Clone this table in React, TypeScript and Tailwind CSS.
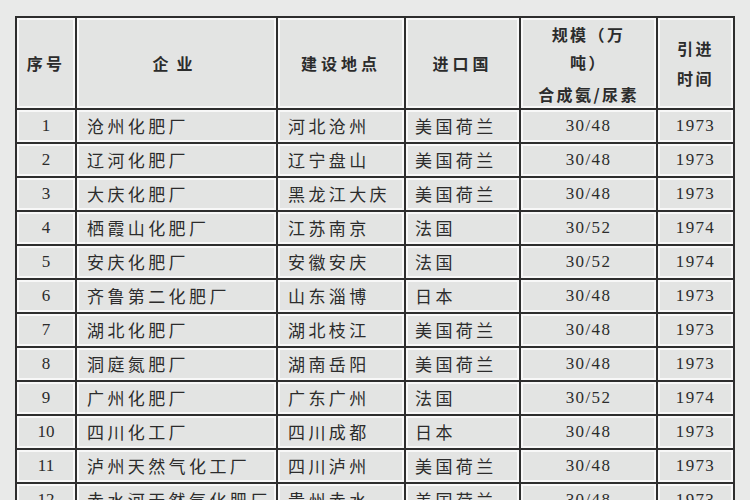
import React from 'react'

interface Plant {
  no: string
  name: string
  site: string
  country: string
  scale: string
  year: string
}

const plants: Plant[] = [
  { no: '1', name: '沧州化肥厂', site: '河北沧州', country: '美国荷兰', scale: '30/48', year: '1973' },
  { no: '2', name: '辽河化肥厂', site: '辽宁盘山', country: '美国荷兰', scale: '30/48', year: '1973' },
  { no: '3', name: '大庆化肥厂', site: '黑龙江大庆', country: '美国荷兰', scale: '30/48', year: '1973' },
  { no: '4', name: '栖霞山化肥厂', site: '江苏南京', country: '法国', scale: '30/52', year: '1974' },
  { no: '5', name: '安庆化肥厂', site: '安徽安庆', country: '法国', scale: '30/52', year: '1974' },
  { no: '6', name: '齐鲁第二化肥厂', site: '山东淄博', country: '日本', scale: '30/48', year: '1973' },
  { no: '7', name: '湖北化肥厂', site: '湖北枝江', country: '美国荷兰', scale: '30/48', year: '1973' },
  { no: '8', name: '洞庭氮肥厂', site: '湖南岳阳', country: '美国荷兰', scale: '30/48', year: '1973' },
  { no: '9', name: '广州化肥厂', site: '广东广州', country: '法国', scale: '30/52', year: '1974' },
  { no: '10', name: '四川化工厂', site: '四川成都', country: '日本', scale: '30/48', year: '1973' },
  { no: '11', name: '泸州天然气化工厂', site: '四川泸州', country: '美国荷兰', scale: '30/48', year: '1973' },
  { no: '12', name: '赤水河天然气化肥厂', site: '贵州赤水', country: '美国荷兰', scale: '30/48', year: '1973' },
]

const cjk = "font-['Noto_Sans_CJK_SC',sans-serif]"
const serif = "font-['Liberation_Serif','Noto_Sans_CJK_SC',serif]"
const cell = 'border-2 border-[#2e2e2e] shadow-[inset_0_0_0_2px_#f8f8f8] bg-[#e3e4e3] p-0'

export default function App() {
  return (
    <div className="w-[750px] h-[500px] overflow-hidden bg-[#e9eae9] pt-[16px] pl-[15px]">
      <table className="border-collapse table-fixed w-[718px] text-[#2c2c2c]">
        <colgroup>
          <col className="w-[60px]" />
          <col className="w-[201px]" />
          <col className="w-[128px]" />
          <col className="w-[115px]" />
          <col className="w-[137px]" />
          <col className="w-[77px]" />
        </colgroup>
        <thead>
          <tr className={`h-[92px] ${cjk} font-bold text-[16px]`}>
            <th className={`${cell} tracking-[0.2em]`}>序号</th>
            <th className={`${cell} tracking-[0.5em]`}>企业</th>
            <th className={`${cell} tracking-[0.25em]`}>建设地点</th>
            <th className={`${cell} tracking-[0.25em]`}>进口国</th>
            <th className={`${cell} tracking-[0.15em] leading-[28px] pt-[2px]`}>
              <div>规模（万</div>
              <div>吨）</div>
              <div className="mt-[4px]">合成氨/尿素</div>
            </th>
            <th className={`${cell} tracking-[0.15em] leading-[30px]`}>
              <div>引进</div>
              <div>时间</div>
            </th>
          </tr>
        </thead>
        <tbody>
          {plants.map((p) => (
            <tr key={p.no} className="h-[34px] text-[17px]">
              <td className={`${cell} ${serif} text-center`}>{p.no}</td>
              <td className={`${cell} ${cjk} pl-[10px] tracking-[0.2em]`}>{p.name}</td>
              <td className={`${cell} ${cjk} pl-[10px] tracking-[0.2em]`}>{p.site}</td>
              <td className={`${cell} ${cjk} pl-[9px] tracking-[0.2em]`}>{p.country}</td>
              <td className={`${cell} ${serif} text-center tracking-[0.08em]`}>{p.scale}</td>
              <td className={`${cell} ${serif} text-center tracking-[0.08em]`}>{p.year}</td>
            </tr>
          ))}
        </tbody>
      </table>
    </div>
  )
}
